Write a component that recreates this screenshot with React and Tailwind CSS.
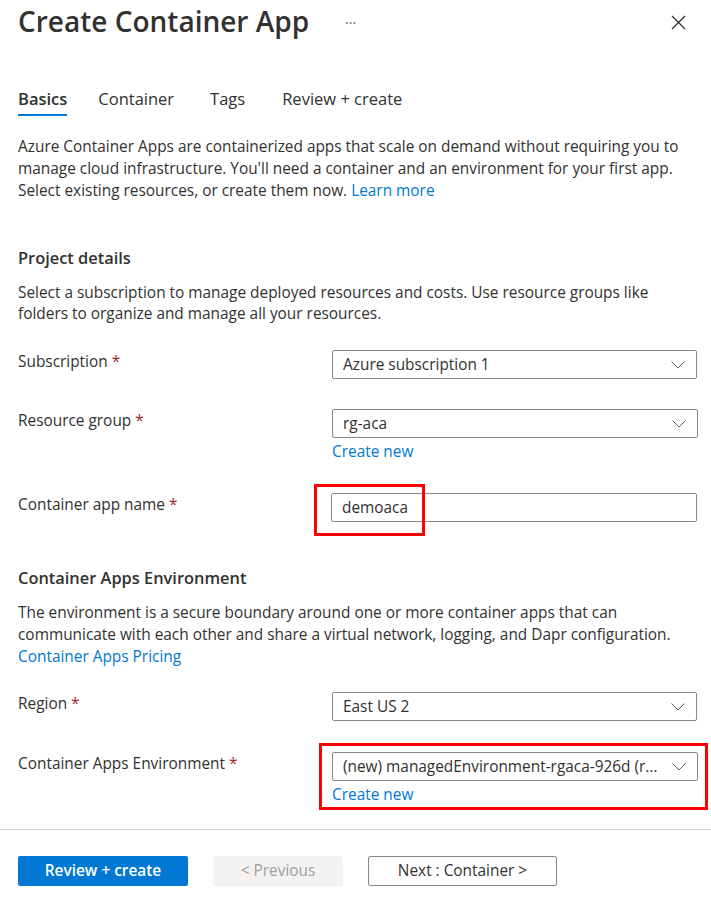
import React from "react";

const font = { fontFamily: '"Open Sans", "Noto Sans", sans-serif' };

function Chevron() {
  return (
    <svg width="14" height="8" viewBox="0 0 14 8" className="shrink-0">
      <polyline points="0.5,0.5 7,7 13.5,0.5" fill="none" stroke="#605e5c" strokeWidth="1" />
    </svg>
  );
}

function Dropdown({ value }) {
  return (
    <div className="flex h-[29px] w-[366px] items-center justify-between rounded-[2px] border border-[#8a8886] bg-white pl-[10px] pr-[11px] text-[15.4px] text-[#323130]">
      <span className="truncate whitespace-nowrap">{value}</span>
      <Chevron />
    </div>
  );
}

function Label({ children }) {
  return (
    <div className="w-[314px] shrink-0 pt-[1px] text-[15.4px] leading-[22px] text-[#323130]">
      {children} <span className="text-[#a4262c]">*</span>
    </div>
  );
}

export default function App() {
  return (
    <div className="min-h-[898px] w-[711px] bg-white text-[#323130]" style={font}>
      <div className="pl-[18px] pr-[14px]">
        <div className="flex h-[42px] items-center">
          <h1 className="text-[28px] font-semibold leading-[42px] text-[#323130]">Create Container App</h1>
          <span className="ml-[36px] mt-[2px] text-[14px] text-[#605e5c]">···</span>
          <div className="ml-auto mr-[11px] mt-[2px]">
            <svg width="15" height="15" viewBox="0 0 15 15">
              <path d="M1 1 L14 14 M14 1 L1 14" stroke="#323130" strokeWidth="1.3" fill="none" />
            </svg>
          </div>
        </div>

        <div className="mt-[46px] flex gap-[31px] text-[16.5px] leading-[22px]">
          <div className="border-b-2 border-[#0078d4] pb-[4px] font-semibold text-[#323130]">Basics</div>
          <div className="text-[#323130]">Container</div>
          <div className="ml-[5px] text-[#323130]">Tags</div>
          <div className="ml-[6px] text-[#323130]">Review + create</div>
        </div>

        <p className="mt-[20px] whitespace-nowrap text-[15.4px] leading-[22px] text-[#323130]">
          Azure Container Apps are containerized apps that scale on demand without requiring you to
          <br />
          manage cloud infrastructure. You'll need a container and an environment for your first app.
          <br />
          Select existing resources, or create them now. <span className="text-[#0078d4]">Learn more</span>
        </p>

        <h2 className="mt-[44px] text-[16.4px] font-semibold leading-[24px] text-[#323130]">Project details</h2>
        <p className="mt-[12px] whitespace-nowrap text-[15.4px] leading-[21px] text-[#323130]">
          Select a subscription to manage deployed resources and costs. Use resource groups like
          <br />
          folders to organize and manage all your resources.
        </p>

        <div className="mt-[26px] flex">
          <Label>Subscription</Label>
          <Dropdown value="Azure subscription 1" />
        </div>

        <div className="mt-[30px] flex">
          <Label>Resource group</Label>
          <div>
            <Dropdown value="rg-aca" />
            <div className="mt-[3px] text-[15.4px] leading-[22px] text-[#0078d4]">Create new</div>
          </div>
        </div>

        <div className="mt-[30px] flex">
          <Label>Container app name</Label>
          <div className="relative -ml-[1px]">
            <div className="flex h-[29px] w-[366px] items-center rounded-[2px] border border-[#8a8886] bg-white pl-[10px] text-[15.4px] text-[#323130]">
              demoaca
            </div>
            <div className="pointer-events-none absolute left-[-17px] top-[-9px] h-[52px] w-[111px] border-[3px] border-[#ff0000]" />
          </div>
        </div>

        <h2 className="mt-[44px] text-[16.4px] font-semibold leading-[24px] text-[#323130]">Container Apps Environment</h2>
        <p className="mt-[12px] whitespace-nowrap text-[15.4px] leading-[22px] text-[#323130]">
          The environment is a secure boundary around one or more container apps that can
          <br />
          communicate with each other and share a virtual network, logging, and Dapr configuration.
          <br />
          <span className="text-[#0078d4]">Container Apps Pricing</span>
        </p>

        <div className="mt-[24px] flex">
          <Label>Region</Label>
          <Dropdown value="East US 2" />
        </div>

        <div className="mt-[31px] flex">
          <Label>Container Apps Environment</Label>
          <div className="relative">
            <Dropdown value="(new) managedEnvironment-rgaca-926d (r..." />
            <div className="mt-[3px] text-[15.4px] leading-[22px] text-[#0078d4]">Create new</div>
            <div className="pointer-events-none absolute left-[-13px] top-[-9px] h-[67px] w-[389px] border-[3px] border-[#ff0000]" />
          </div>
        </div>
      </div>

      <div className="mt-[23px] border-t border-[#d6d6d6]" />

      <div className="mt-[26px] flex gap-[25px] pl-[18px]">
        <div className="flex h-[30px] w-[170px] items-center justify-center rounded-[2px] bg-[#0078d4] text-[15.4px] font-semibold text-white">
          Review + create
        </div>
        <div className="flex h-[30px] w-[130px] items-center justify-center rounded-[2px] bg-[#f3f2f1] text-[15.4px] text-[#a19f9d]">
          &lt; Previous
        </div>
        <div className="flex h-[30px] w-[189px] items-center justify-center rounded-[2px] border border-[#8a8886] bg-white text-[15.4px] text-[#323130]">
          Next : Container &gt;
        </div>
      </div>
    </div>
  );
}
